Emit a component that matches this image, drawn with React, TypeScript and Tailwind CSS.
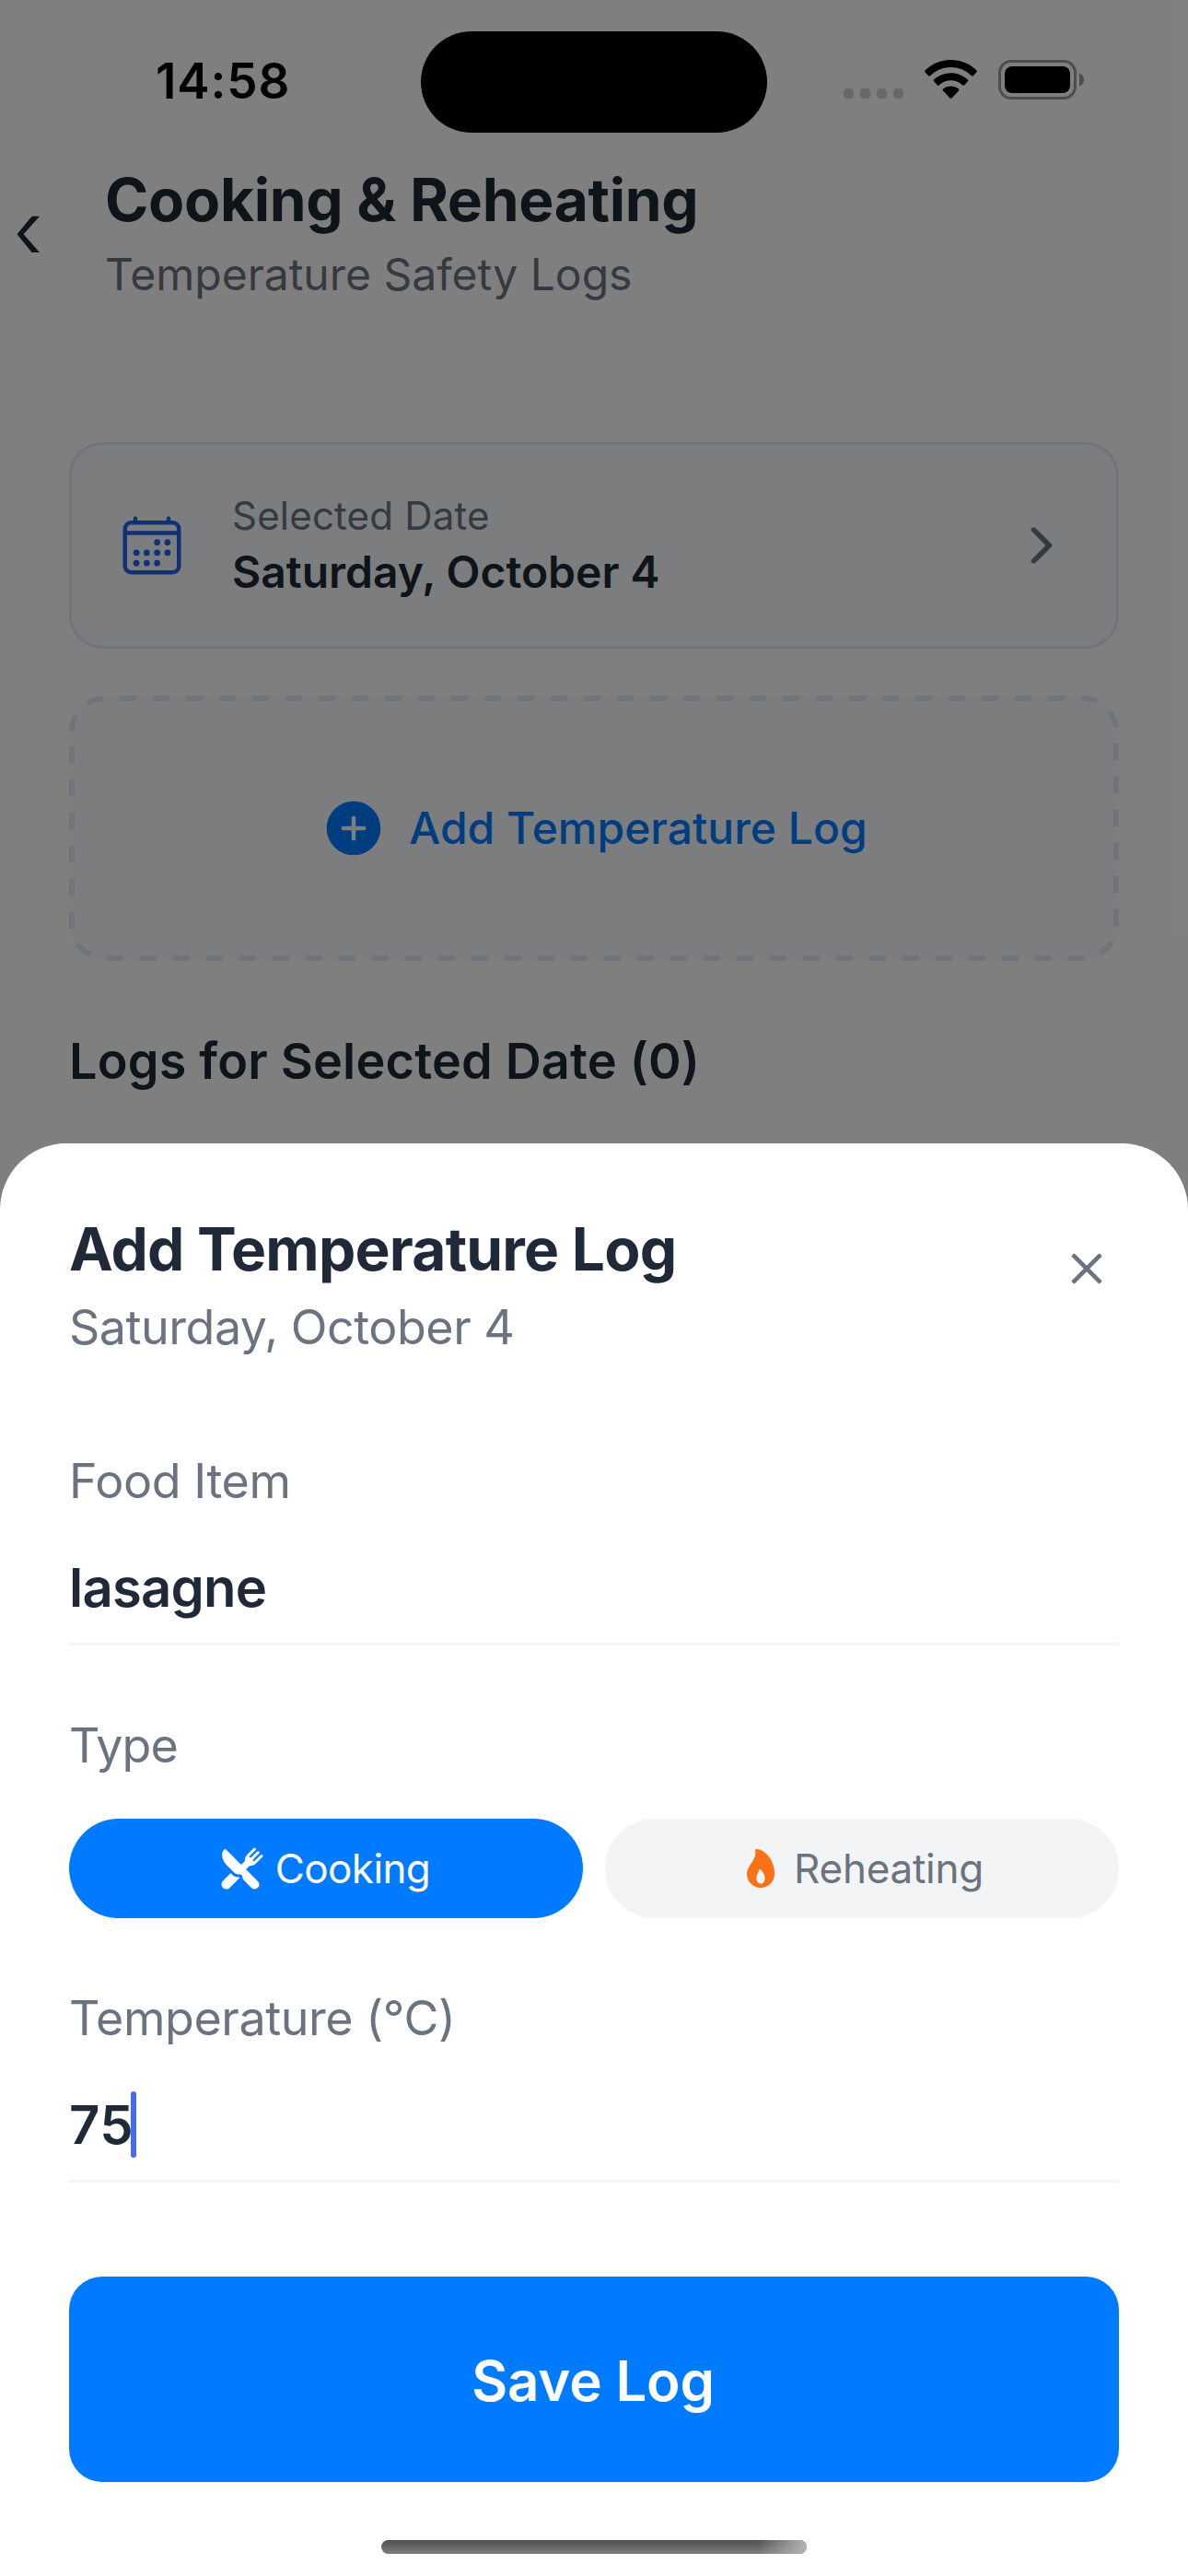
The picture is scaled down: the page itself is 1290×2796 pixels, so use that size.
import type { ReactNode } from "react";
import {
  IoAddCircle,
  IoCalendarOutline,
  IoChevronForwardOutline,
  IoFlame,
  IoRestaurant,
} from "react-icons/io5";

function WifiIcon() {
  return (
    <svg className="h-[42px] w-[57px]" viewBox="0 0 57 42" fill="#000">
      <path d="M28.5 0C39.2 0 49.1 4.200 56.300 11.200Q57.400 12.300 56.300 13.500L53 17Q51.900 18.100 50.700 17A32 32 0 0 0 6.300 17Q5.100 18.100 4 17L.7 13.500Q-.4 12.300.7 11.200C7.900 4.200 17.800 0 28.500 0Z" />
      <path d="M28.500 14.200C35.500 14.200 41.900 16.900 46.700 21.300Q47.900 22.400 46.700 23.600L43.300 27.200Q42.200 28.300 41 27.200A18.500 18.500 0 0 0 16 27.200Q14.800 28.300 13.700 27.200L10.300 23.600Q9.100 22.400 10.300 21.300C15.100 16.900 21.500 14.200 28.500 14.200Z" />
      <path d="M28.500 28.500C31.700 28.500 34.600 29.600 36.900 31.500Q38 32.500 37 33.600L29.700 41.200Q28.500 42.300 27.300 41.200L20 33.600Q19 32.500 20.100 31.500C22.400 29.600 25.300 28.500 28.500 28.500Z" />
    </svg>
  );
}

function BatteryIcon() {
  return (
    <svg className="h-[43px] w-[93px]" viewBox="0 0 93 43">
      <rect x="1.500" y="1.500" width="82" height="40" rx="12.500" fill="none" stroke="#4d4d4d" strokeWidth="3" />
      <rect x="7" y="7" width="71" height="29" rx="8" fill="#000" />
      <path d="M88 14.500C91 15.500 93 18.500 93 21.500S91 27.500 88 28.500Z" fill="#4d4d4d" />
    </svg>
  );
}

function StatusBar() {
  return (
    <div className="absolute inset-x-0 top-0 flex h-[178px] items-start">
      <div className="mt-[58px] ml-[169px] w-[288px] text-[53px] leading-[60px] font-semibold tracking-[0.9px] text-black">
        14:58
      </div>
      <div className="mt-[34px] h-[110px] w-[376px] rounded-full bg-black" />
      <div className="mt-[96px] ml-[83px] flex gap-[7px]">
        {[0, 1, 2, 3].map((i) => (
          <div key={i} className="h-[11px] w-[11px] rounded-[4px] bg-[#686868]" />
        ))}
      </div>
      <div className="mt-[65px] ml-[23px] flex gap-[23px]">
        <WifiIcon />
        <BatteryIcon />
      </div>
    </div>
  );
}

function Header() {
  return (
    <header className="flex items-start pl-[18px]">
      <svg className="mt-[55px] h-[40px] w-[26px]" viewBox="0 0 26 40" fill="#1f2937">
        <path d="M16.600.700H25L7.600 20.300 25 40H16.600L.5 20.300Z" />
      </svg>
      <div className="ml-[70px]">
        <h1 className="text-[64px] leading-[76px] font-bold tracking-[-0.3px] text-[#1f2937]">
          Cooking &amp; Reheating
        </h1>
        <p className="mt-[14px] text-[48px] leading-[58px] text-[#6b7280]">
          Temperature Safety Logs
        </p>
      </div>
    </header>
  );
}

function DateCard() {
  return (
    <div className="mt-[153px] flex h-[224px] items-center rounded-[36px] border-[3px] border-[#e2e8f0] bg-[#f8fafc] px-[51px]">
      <IoCalendarOutline className="text-[72px] text-[#2563eb]" />
      <div className="ml-[51px] flex-1">
        <div className="text-[42px] leading-[50px] tracking-[0.2px] text-[#6b7280]">Selected Date</div>
        <div className="mt-[7px] text-[48px] leading-[58px] font-semibold text-[#1f2937]">
          Saturday, October 4
        </div>
      </div>
      <IoChevronForwardOutline className="text-[60px] text-[#6b7280]" />
    </div>
  );
}

function AddLogCard() {
  return (
    <div className="relative mt-[51px] flex h-[288px] items-center justify-center rounded-[39px] bg-[#f8fafc]">
      <svg className="absolute inset-0 h-[288px] w-[1140px]" viewBox="0 0 1140 288" fill="none">
        <path
          d="M3 39A36 36 0 0 1 39 3H1101A36 36 0 0 1 1137 39V249A36 36 0 0 1 1101 285H39A36 36 0 0 1 3 249Z"
          stroke="#e2e8f0"
          strokeWidth="6"
          strokeDasharray="18 18"
        />
      </svg>
      <IoAddCircle className="text-[72px] text-[#007aff]" />
      <span className="ml-[24px] text-[48px] leading-[58px] font-medium text-[#007aff]">
        Add Temperature Log
      </span>
    </div>
  );
}

function FieldLabel({ children }: { children: ReactNode }) {
  return <div className="text-[52px] leading-[66px] tracking-[-0.45px] text-[#6b7280]">{children}</div>;
}

function Field({ label, value, focused = false }: { label: string; value: string; focused?: boolean }) {
  return (
    <div>
      <FieldLabel>{label}</FieldLabel>
      <div className="mt-[46px] flex items-center border-b-[3px] border-[#f3f4f6] pb-[24px]">
        <span
          className={
            focused
              ? "text-[58px] leading-[72px] font-semibold tracking-[0.45px] text-[#1f2937]"
              : "text-[58px] leading-[72px] font-semibold tracking-[-0.79px] text-[#1f2937]"
          }
        >
          {value}
        </span>
        {focused && <span className="-ml-[3px] h-[72px] w-[6px] rounded-full bg-[#466bf2]" />}
      </div>
    </div>
  );
}

function CloseIcon() {
  return (
    <svg className="mt-[26px] mr-[2px] h-[66px] w-[66px]" viewBox="-33 -33 66 66" fill="#6b7280">
      <rect x="-21.500" y="-2.300" width="43" height="4.600" rx="1.200" transform="rotate(45)" />
      <rect x="-21.500" y="-2.300" width="43" height="4.600" rx="1.200" transform="rotate(-45)" />
    </svg>
  );
}

function Sheet() {
  return (
    <section className="absolute inset-x-0 bottom-0 flex h-[1555px] flex-col rounded-t-[72px] bg-white px-[75px] pt-[77px]">
      <div className="flex items-start justify-between">
        <div>
          <h2 className="text-[64px] leading-[76px] font-bold tracking-[-0.78px] text-[#1f2937]">
            Add Temperature Log
          </h2>
          <p className="mt-[14px] text-[52px] leading-[66px] tracking-[-0.5px] text-[#6b7280]">
            Saturday, October 4
          </p>
        </div>
        <CloseIcon />
      </div>

      <div className="mt-[101px] flex flex-col gap-[76px]">
        <Field label="Food Item" value="lasagne" />
        <div>
          <FieldLabel>
            <span className="tracking-[-1px]">Type</span>
          </FieldLabel>
          <div className="mt-[46px] grid grid-cols-2 gap-[24px]">
            <button className="flex h-[108px] items-center justify-center gap-[12px] rounded-full bg-[#007aff] pr-[2px] text-[44px] tracking-[-0.6px] text-white">
              <IoRestaurant className="text-[48px]" />
              Cooking
            </button>
            <button className="flex h-[108px] items-center justify-center gap-[12px] rounded-full bg-[#f3f4f6] pr-[2px] text-[44px] tracking-[-0.26px] text-[#6b7280]">
              <IoFlame className="text-[48px] text-[#f97316]" />
              Reheating
            </button>
          </div>
        </div>
        <Field label="Temperature (°C)" value="75" focused />
      </div>

      <button className="mt-[102px] h-[223px] rounded-[36px] bg-[#007aff] pt-[2px] pr-[2px] text-[60px] font-semibold tracking-[-0.2px] text-white">
        Save Log
      </button>

      <div className="mt-[63px] h-[15px] w-[462px] self-center overflow-hidden rounded-full bg-linear-to-b from-[#4e4e4e] to-[#7e7e7e]">
        <div className="ml-auto h-full w-[54px] bg-linear-to-r from-transparent to-[#b4b4b4]" />
      </div>
    </section>
  );
}

export default function App() {
  return (
    <div className="relative h-[2796px] w-[1290px] overflow-hidden bg-white font-['Inter',sans-serif]">
      <main className="pt-[179px]">
        <Header />
        <div className="px-[75px]">
          <DateCard />
          <AddLogCard />
          <h2 className="mt-[77px] text-[54px] leading-[64px] font-semibold tracking-[0.18px] text-[#1f2937]">
            Logs for Selected Date (0)
          </h2>
        </div>
      </main>
      <div className="absolute inset-0 bg-black/50" />
      <StatusBar />
      <Sheet />
    </div>
  );
}
